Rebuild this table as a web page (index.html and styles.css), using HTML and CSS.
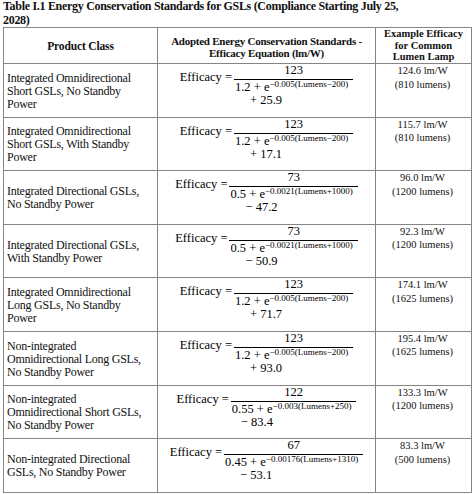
FILE: index.html
```html
<!DOCTYPE html>
<html lang="en">
<head>
<meta charset="utf-8">
<title>Table I.1 Energy Conservation Standards for GSLs</title>
<link rel="stylesheet" href="styles.css">
</head>
<body>
<div class="page">
  <p class="caption">Table I.1 Energy Conservation Standards for GSLs (Compliance Starting July 25, 2028)</p>
  <div class="table">
    <div class="cell head h1">Product Class</div>
    <div class="cell head h2">Adopted Energy Conservation Standards -<br>Efficacy Equation (lm/W)</div>
    <div class="cell head h3">Example Efficacy<br>for Common<br>Lumen Lamp</div>

    <div class="cell cls">Integrated Omnidirectional<br>Short GSLs, No Standby<br>Power</div>
    <div class="cell eqcell"><div class="eq"><span class="lhs">Efficacy =</span><span class="frac"><span class="num">123</span><span class="den">1.2 + e<sup>−0.005(Lumens−200)</sup></span><span class="tail">+ 25.9</span></span></div></div>
    <div class="cell ex">124.6 lm/W<br>(810 lumens)</div>

    <div class="cell cls">Integrated Omnidirectional<br>Short GSLs, With Standby<br>Power</div>
    <div class="cell eqcell"><div class="eq"><span class="lhs">Efficacy =</span><span class="frac"><span class="num">123</span><span class="den">1.2 + e<sup>−0.005(Lumens−200)</sup></span><span class="tail">+ 17.1</span></span></div></div>
    <div class="cell ex">115.7 lm/W<br>(810 lumens)</div>

    <div class="cell cls">Integrated Directional GSLs,<br>No Standby Power</div>
    <div class="cell eqcell"><div class="eq"><span class="lhs">Efficacy =</span><span class="frac"><span class="num">73</span><span class="den">0.5 + e<sup>−0.0021(Lumens+1000)</sup></span><span class="tail">− 47.2</span></span></div></div>
    <div class="cell ex">96.0 lm/W<br>(1200 lumens)</div>

    <div class="cell cls">Integrated Directional GSLs,<br>With Standby Power</div>
    <div class="cell eqcell"><div class="eq"><span class="lhs">Efficacy =</span><span class="frac"><span class="num">73</span><span class="den">0.5 + e<sup>−0.0021(Lumens+1000)</sup></span><span class="tail">− 50.9</span></span></div></div>
    <div class="cell ex">92.3 lm/W<br>(1200 lumens)</div>

    <div class="cell cls">Integrated Omnidirectional<br>Long GSLs, No Standby<br>Power</div>
    <div class="cell eqcell"><div class="eq"><span class="lhs">Efficacy =</span><span class="frac"><span class="num">123</span><span class="den">1.2 + e<sup>−0.005(Lumens−200)</sup></span><span class="tail">+ 71.7</span></span></div></div>
    <div class="cell ex">174.1 lm/W<br>(1625 lumens)</div>

    <div class="cell cls">Non-integrated<br>Omnidirectional Long GSLs,<br>No Standby Power</div>
    <div class="cell eqcell"><div class="eq"><span class="lhs">Efficacy =</span><span class="frac"><span class="num">123</span><span class="den">1.2 + e<sup>−0.005(Lumens−200)</sup></span><span class="tail">+ 93.0</span></span></div></div>
    <div class="cell ex">195.4 lm/W<br>(1625 lumens)</div>

    <div class="cell cls">Non-integrated<br>Omnidirectional Short GSLs,<br>No Standby Power</div>
    <div class="cell eqcell"><div class="eq"><span class="lhs">Efficacy =</span><span class="frac"><span class="num">122</span><span class="den">0.55 + e<sup>−0.003(Lumens+250)</sup></span><span class="tail short">− 83.4</span></span></div></div>
    <div class="cell ex">133.3 lm/W<br>(1200 lumens)</div>

    <div class="cell cls">Non-integrated Directional<br>GSLs, No Standby Power</div>
    <div class="cell eqcell"><div class="eq"><span class="lhs">Efficacy =</span><span class="frac"><span class="num">67</span><span class="den">0.45 + e<sup>−0.00176(Lumens+1310)</sup></span><span class="tail">− 53.1</span></span></div></div>
    <div class="cell ex">83.3 lm/W<br>(500 lumens)</div>
  </div>
</div>
</body>
</html>
```
FILE: styles.css
```css
html, body {
  margin: 0;
  padding: 0;
  background: #ffffff;
}

body {
  color: #111111;
  font-family: "Liberation Serif", "Times New Roman", serif;
}

.page {
  padding: 0 3px;
}

.caption {
  margin: 0;
  max-width: 415px;
  height: 27px;
  font-weight: bold;
  font-size: 12px;
  letter-spacing: -0.3px;
  line-height: 13.5px;
}

.table {
  display: grid;
  grid-template-columns: 154px 218px 96px;
  grid-template-rows: 36px repeat(8, 53.6px);
  width: max-content;
  border-top: 1px solid #858585;
  border-left: 1px solid #858585;
}

.cell {
  box-sizing: border-box;
  border-right: 1px solid #858585;
  border-bottom: 1px solid #858585;
  overflow: visible;
}

.head {
  display: flex;
  align-items: center;
  justify-content: center;
  text-align: center;
  font-weight: bold;
}

.h1 {
  font-size: 11.5px;
  letter-spacing: -0.15px;
  line-height: 12px;
}

.h2 {
  font-size: 11px;
  letter-spacing: -0.25px;
  line-height: 12px;
  padding-top: 2px;
}

.h3 {
  font-size: 10.5px;
  line-height: 11.6px;
}

.cls {
  display: flex;
  align-items: center;
  padding: 2px 4px 0 3px;
  font-size: 12px;
  letter-spacing: -0.25px;
  line-height: 13px;
}

.ex {
  text-align: center;
  font-size: 10.5px;
  line-height: 13.5px;
  padding: 0 2px 0 0;
}

.eqcell {
  display: flex;
  justify-content: center;
  align-items: flex-start;
}

.eq {
  display: flex;
  align-items: flex-start;
  font-size: 12.5px;
  line-height: 12px;
  color: #000000;
}

.lhs {
  margin-top: 7px;
  margin-right: 2px;
  white-space: nowrap;
}

.frac {
  display: flex;
  flex-direction: column;
}

.num {
  text-align: center;
  padding-bottom: 3px;
  border-bottom: 1px solid #000000;
}

.den {
  padding: 0 5px 0 1px;
  line-height: 14px;
  white-space: nowrap;
}

.den sup {
  font-size: 9px;
  line-height: 0;
  vertical-align: 4px;
}

.tail {
  margin-left: 16px;
  line-height: 13px;
  white-space: nowrap;
}

.tail.short {
  margin-left: 10px;
}
```
